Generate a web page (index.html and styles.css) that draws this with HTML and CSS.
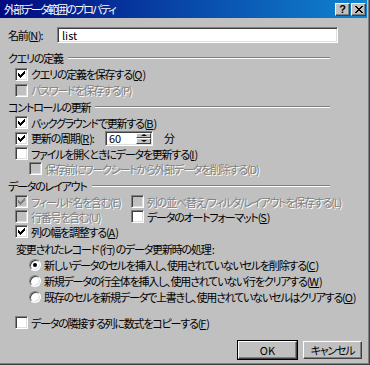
FILE: index.html
```html
<!DOCTYPE html>
<html>
<head>
<meta charset="utf-8">
<title>外部データ範囲のプロパティ</title>
<link rel="stylesheet" href="styles.css">
</head>
<body>
<div class="window">
	<div class="titlebar">
		<span class="title">外部データ範囲のプロパティ</span>
		<span class="tbtn help">?</span>
		<span class="tbtn close"><svg width="8" height="7" viewBox="0 0 8 7"><path d="M0 0h2v1h1v1h2v-1h1v-1h2v1h-1v1h-1v1h-1v1h1v1h1v1h1v1h-2v-1h-1v-1h-2v1h-1v1h-2v-1h1v-1h1v-1h1v-1h-1v-1h-1v-1h-1z" fill="#000" shape-rendering="crispEdges"/></svg></span>
	</div>

	<div class="namerow">
		<span class="namelabel">名前(<u>N</u>):</span>
		<div class="field">list</div>
	</div>

	<!-- query definition -->
	<div class="ghead g1"><span>クエリの定義</span><i class="etch"></i></div>
	<div class="row tall"><span class="cb"><svg width="13" height="13"><path class="tick" d="M3 5h1v1h1v1h1v-1h1v-1h1v-1h1v-1h1v3h-1v1h-1v1h-1v1h-1v1h-1v-1h-1v-1h-1z"/></svg></span><span>クエリの定義を保存する(<u>Q</u>)</span></div>
	<div class="row tall off"><span class="cb"></span><span>パスワードを保存する(P)</span></div>

	<!-- refresh control -->
	<div class="ghead g2"><span>コントロールの更新</span><i class="etch"></i></div>
	<div class="row"><span class="cb"><svg width="13" height="13"><path class="tick" d="M3 5h1v1h1v1h1v-1h1v-1h1v-1h1v-1h1v3h-1v1h-1v1h-1v1h-1v1h-1v-1h-1v-1h-1z"/></svg></span><span>バックグラウンドで更新する(<u>B</u>)</span></div>
	<div class="row tall">
		<span class="cb"><svg width="13" height="13"><path class="tick" d="M3 5h1v1h1v1h1v-1h1v-1h1v-1h1v-1h1v3h-1v1h-1v1h-1v1h-1v1h-1v-1h-1v-1h-1z"/></svg></span><span class="periodlabel">更新の周期(<u>R</u>):</span>
		<div class="spin">
			<span class="spinval">60</span>
			<span class="spinbtns"><i class="up"></i><i class="down"></i></span>
		</div>
		<span class="unit">分</span>
	</div>
	<div class="row"><span class="cb"></span><span>ファイルを開くときにデータを更新する(<u>I</u>)</span></div>
	<div class="row off indent"><span class="cb"></span><span>保存前にワークシートから外部データを削除する(D)</span></div>

	<!-- data layout -->
	<div class="ghead g3"><span>データのレイアウト</span><i class="etch"></i></div>
	<div class="cols">
		<div class="row off"><span class="cb"><svg width="13" height="13"><path class="tick" d="M3 5h1v1h1v1h1v-1h1v-1h1v-1h1v-1h1v3h-1v1h-1v1h-1v1h-1v1h-1v-1h-1v-1h-1z"/></svg></span><span>フィールド名を含む(E)</span></div>
		<div class="row off right"><span class="cb"></span><span>列の並べ替え/フィルタ/レイアウトを保存する(L)</span></div>
		<div class="row off"><span class="cb"></span><span>行番号を含む(U)</span></div>
		<div class="row right"><span class="cb"></span><span>データのオートフォーマット(<u>S</u>)</span></div>
		<div class="row"><span class="cb"><svg width="13" height="13"><path class="tick" d="M3 5h1v1h1v1h1v-1h1v-1h1v-1h1v-1h1v3h-1v1h-1v1h-1v1h-1v1h-1v-1h-1v-1h-1z"/></svg></span><span>列の幅を調整する(<u>A</u>)</span></div>
	</div>

	<div class="sublabel">変更されたレコード (行) のデータ更新時の処理 :</div>
	<div class="row tall radio"><span class="rb on"></span><span>新しいデータのセルを挿入し、使用されていないセルを削除する(<u>C</u>)</span></div>
	<div class="row tall radio"><span class="rb"></span><span>新規データの行全体を挿入し、使用されていない行をクリアする(<u>W</u>)</span></div>
	<div class="row radio"><span class="rb"></span><span>既存のセルを新規データで上書きし、使用されていないセルはクリアする(<u>O</u>)</span></div>

	<div class="row copyrow"><span class="cb"></span><span>データの隣接する列に数式をコピーする(<u>F</u>)</span></div>

	<div class="buttons">
		<span class="btn latin">OK</span>
		<span class="btn">キャンセル</span>
	</div>
</div>
</body>
</html>
```

FILE: styles.css
```css
body {
	margin: 0;
	background: #c0c0c0;
	font-family: "Noto Sans CJK JP", "Noto Sans CJK SC", sans-serif;
	font-size: 11px;
	letter-spacing: -1.2px;
	font-feature-settings: "palt";
	color: #000;
}
u {
	text-decoration: underline;
	text-underline-offset: 1px;
	letter-spacing: 0;
}
.latin {
	letter-spacing: 0;
}

.window {
	width: 370px;
	height: 365px;
	box-sizing: border-box;
	background: #c0c0c0;
	border-right: 1px solid #404040;
	border-bottom: 1px solid #404040;
	box-shadow: inset -1px -1px 0 #808080;
	padding-right: 2px;
}

/* title bar */
.titlebar {
	height: 18px;
	display: flex;
	align-items: center;
	padding: 0 1px 0 4px;
	background: linear-gradient(to right, #000a80, #1084d0);
	color: #fff;
}
.title {
	flex: 1;
	line-height: 18px;
	letter-spacing: -1.8px;
}
.tbtn {
	width: 15px;
	height: 13px;
	box-sizing: border-box;
	display: flex;
	align-items: center;
	justify-content: center;
	background: #c0c0c0;
	border: 1px solid;
	border-color: #fff #404040 #404040 #fff;
	box-shadow: inset -1px -1px 0 #808080;
	color: #000;
	letter-spacing: 0;
}
.help {
	font-family: "Liberation Sans", sans-serif;
	font-weight: bold;
	font-size: 11px;
	line-height: 11px;
}
.close {
	margin-left: 1px;
}
.close svg {
	display: block;
}

/* name */
.namerow {
	display: flex;
	align-items: center;
	height: 16px;
	margin: 9px 0 0 8px;
}
.namelabel {
	width: 49px;
}
.field {
	width: 281px;
	height: 16px;
	box-sizing: border-box;
	background: #fff;
	border: 1px solid;
	border-color: #808080 #fff #fff #808080;
	box-shadow: inset 1px 1px 0 #404040, inset -1px -1px 0 #dfdfdf;
	padding-left: 4px;
	line-height: 14px;
	letter-spacing: 0;
}

/* group headers */
.ghead {
	display: flex;
	align-items: center;
	height: 16px;
	width: 322px;
	margin-left: 8px;
}
.g1 { margin-top: 7px; }
.g2 { margin-top: 1px; }
.g3 { margin-top: 2px; }
.etch {
	flex: 1;
	height: 0;
	border-top: 1px solid #808080;
	border-bottom: 1px solid #fff;
	margin-left: 5px;
}

/* rows */
.row {
	display: flex;
	align-items: center;
	height: 15px;
	margin-left: 15px;
	white-space: nowrap;
}
.row.tall {
	height: 16px;
}
.cb {
	width: 13px;
	height: 13px;
	flex: none;
	box-sizing: border-box;
	background: #fff;
	border: 1px solid;
	border-color: #808080 #fff #fff #808080;
	box-shadow: inset 1px 1px 0 #404040, inset -1px -1px 0 #dfdfdf;
	margin-right: 3px;
	position: relative;
}
.cb svg {
	position: absolute;
	left: -1px;
	top: -1px;
	shape-rendering: crispEdges;
}
.tick {
	fill: #000;
}
.off {
	color: #808080;
	text-shadow: 1px 1px 0 #fff;
}
.off .cb {
	background: #c0c0c0;
}
.off .tick {
	fill: #808080;
}
.indent {
	margin-left: 29px;
}

/* period spinner */
.periodlabel {
	width: 74px;
}
.spin {
	width: 48px;
	height: 15px;
	box-sizing: border-box;
	display: flex;
	background: #fff;
	border: 1px solid;
	border-color: #808080 #fff #fff #808080;
	box-shadow: inset 1px 1px 0 #404040, inset -1px -1px 0 #dfdfdf;
	letter-spacing: 0;
}
.spinval {
	flex: 1;
	padding-left: 3px;
	line-height: 13px;
}
.spinbtns {
	width: 15px;
	display: flex;
	flex-direction: column;
	padding: 1px 1px 1px 0;
}
.spinbtns i {
	flex: 1;
	box-sizing: border-box;
	background: #c0c0c0;
	border: 1px solid;
	border-color: #fff #404040 #404040 #fff;
	display: flex;
	align-items: center;
	justify-content: center;
}
.spinbtns i::after {
	content: "";
	border-left: 3px solid transparent;
	border-right: 3px solid transparent;
}
.spinbtns .up::after {
	border-bottom: 2px solid #000;
}
.spinbtns .down::after {
	border-top: 2px solid #000;
}
.unit {
	margin-left: 11px;
}

/* layout columns */
.cols {
	display: grid;
	grid-template-columns: 131px auto;
}
.cols .right {
	margin-left: 0;
}

.sublabel {
	height: 16px;
	line-height: 16px;
	margin: 2px 0 0 16px;
}

/* radios */
.radio {
	margin-left: 29px;
}
.rb {
	width: 12px;
	height: 12px;
	flex: none;
	box-sizing: border-box;
	border-radius: 50%;
	background: #fff;
	border: 1px solid;
	border-color: #808080 #fff #fff #808080;
	box-shadow: inset 1px 1px 0 #404040, inset -1px -1px 0 #dfdfdf;
	margin-right: 3px;
	position: relative;
}
.rb.on::after {
	content: "";
	position: absolute;
	left: 3px;
	top: 3px;
	width: 4px;
	height: 4px;
	border-radius: 50%;
	background: #000;
}

.copyrow {
	margin-top: 11px;
}

/* dialog buttons */
.buttons {
	display: flex;
	justify-content: flex-end;
	gap: 6px;
	margin: 11px 5px 0 0;
}
.btn {
	width: 59px;
	height: 18px;
	box-sizing: border-box;
	display: flex;
	align-items: center;
	justify-content: center;
	background: #c0c0c0;
	border: 1px solid;
	border-color: #fff #404040 #404040 #fff;
	box-shadow: inset -1px -1px 0 #808080;
}
.btn:first-child {
	outline: 1px solid #000;
}
```
